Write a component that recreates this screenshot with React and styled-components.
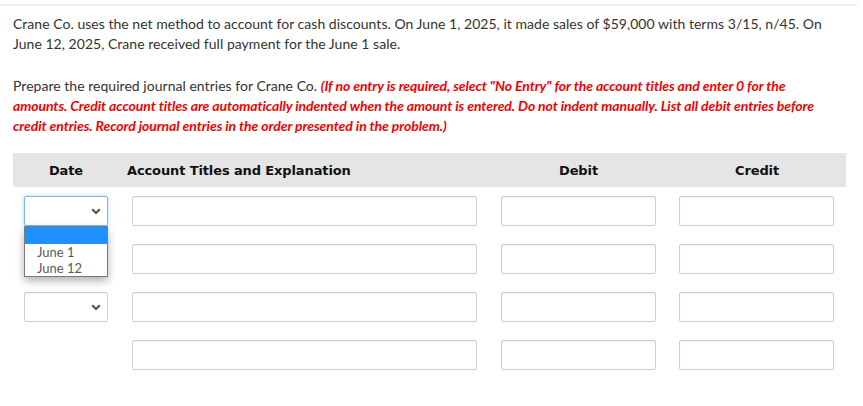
import React from 'react';
import styled, { createGlobalStyle } from 'styled-components';

const GlobalStyle = createGlobalStyle`
  html, body {
    margin: 0;
    padding: 0;
    background: #fff;
  }
  body {
    font-family: Lato, "Open Sans", sans-serif;
    color: #333;
  }
`;

const Page = styled.div`
  width: 863px;
  height: 406px;
  box-sizing: border-box;
  padding-top: 4px;
  overflow: hidden;
`;

const TopRule = styled.div`
  height: 2px;
  background: #efefef;
  margin-right: 6px;
`;

const Question = styled.div`
  padding: 8px 0 0 13px;
  width: 824px;
`;

const Para = styled.p`
  margin: 0 0 ${(p) => p.$gap || 0}px 0;
  font-size: 14px;
  line-height: 20px;
  letter-spacing: 0.03px;
  color: #333;
`;

const Note = styled.span`
  color: #f40000;
  font-weight: 700;
  font-style: italic;
  letter-spacing: -0.08px;
`;

const Table = styled.div`
  margin: 17px 0 0 13px;
  width: 833px;
  position: relative;
`;

const Row = styled.div`
  display: grid;
  grid-template-columns: 106px 370px 179px 178px;
  align-items: ${(p) => (p.$head ? 'center' : 'start')};
  height: ${(p) => (p.$head ? 34 : 48)}px;
  box-sizing: border-box;
  padding-top: ${(p) => (p.$head ? 0 : 9)}px;
  background: ${(p) => (p.$head ? '#e5e5e5' : 'transparent')};
`;

const HeadCell = styled.div`
  font-family: "DejaVu Sans", Verdana, sans-serif;
  font-weight: 700;
  font-size: 13px;
  letter-spacing: -0.12px;
  color: #111;
  text-align: ${(p) => p.$align || 'center'};
  padding-left: ${(p) => p.$pl || 0}px;
`;

const Cell = styled.div`
  padding: 0 ${(p) => p.$pr ?? 12}px 0 ${(p) => p.$pl ?? 12}px;
  position: relative;
`;

const Field = styled.div`
  height: 30px;
  box-sizing: border-box;
  border: 1px solid #cdcdcd;
  border-radius: 2px;
  background: #fff;
  box-shadow: inset 0 1px 1px rgba(0, 0, 0, 0.04);
`;

const SelectBox = styled.div`
  height: 30px;
  box-sizing: border-box;
  border: 1px solid ${(p) => (p.$focused ? '#7db8ec' : '#cdcdcd')};
  border-radius: 2px;
  background: #fff;
  display: flex;
  align-items: center;
  justify-content: flex-end;
  padding-right: 6px;
  box-shadow: ${(p) => (p.$focused ? '0 0 4px rgba(102, 175, 233, 0.55)' : 'inset 0 1px 1px rgba(0,0,0,0.04)')};
`;

const Menu = styled.div`
  position: absolute;
  left: 11px;
  top: 30px;
  width: 84px;
  box-sizing: border-box;
  border: 1px solid #7a7a7a;
  background: #fff;
  box-shadow: 0 4px 8px rgba(0, 0, 0, 0.3);
  z-index: 2;
  font-family: Lato, sans-serif;
  font-size: 13px;
  color: #5a5a5a;
`;

const Option = styled.div`
  height: ${(p) => (p.$active ? 17 : 16)}px;
  line-height: 16px;
  padding-left: 12px;
  background: ${(p) => (p.$active ? '#1e90ff' : 'transparent')};
`;

const Chevron = () => (
  <svg width="10" height="7" viewBox="0 0 10 7">
    <path d="M1.2 1.3 L5 5 L8.8 1.3" fill="none" stroke="#555" strokeWidth="2.2" />
  </svg>
);

const Select = ({ focused }) => (
  <SelectBox $focused={focused}>
    <Chevron />
  </SelectBox>
);

const rows = [
  { date: true, open: true },
  { date: false },
  { date: true },
  { date: false },
];

export default function App() {
  return (
    <Page>
      <GlobalStyle />
      <TopRule />
      <Question>
        <Para $gap={22}>
          Crane Co. uses the net method to account for cash discounts. On June 1, 2025, it made sales of $59,000 with terms 3/15, n/45. On
          June 12, 2025, Crane received full payment for the June 1 sale.
        </Para>
        <Para>
          Prepare the required journal entries for Crane Co.{' '}
          <Note>
            (If no entry is required, select "No Entry" for the account titles and enter 0 for the
            amounts. Credit account titles are automatically indented when the amount is entered. Do not indent manually. List all debit entries before
            credit entries. Record journal entries in the order presented in the problem.)
          </Note>
        </Para>
      </Question>
      <Table>
        <Row $head>
          <HeadCell>Date</HeadCell>
          <HeadCell $align="left" $pl={8}>Account Titles and Explanation</HeadCell>
          <HeadCell>Debit</HeadCell>
          <HeadCell>Credit</HeadCell>
        </Row>
        {rows.map((r, i) => (
          <Row key={i}>
            <Cell $pl={11} $pr={11}>
              {r.date && <Select focused={r.open} />}
              {r.open && (
                <Menu>
                  <Option $active />
                  <Option>June 1</Option>
                  <Option>June 12</Option>
                </Menu>
              )}
            </Cell>
            <Cell $pl={13} $pr={12}>
              <Field />
            </Cell>
            <Cell $pl={12} $pr={12}>
              <Field />
            </Cell>
            <Cell $pl={11} $pr={12}>
              <Field />
            </Cell>
          </Row>
        ))}
      </Table>
    </Page>
  );
}
